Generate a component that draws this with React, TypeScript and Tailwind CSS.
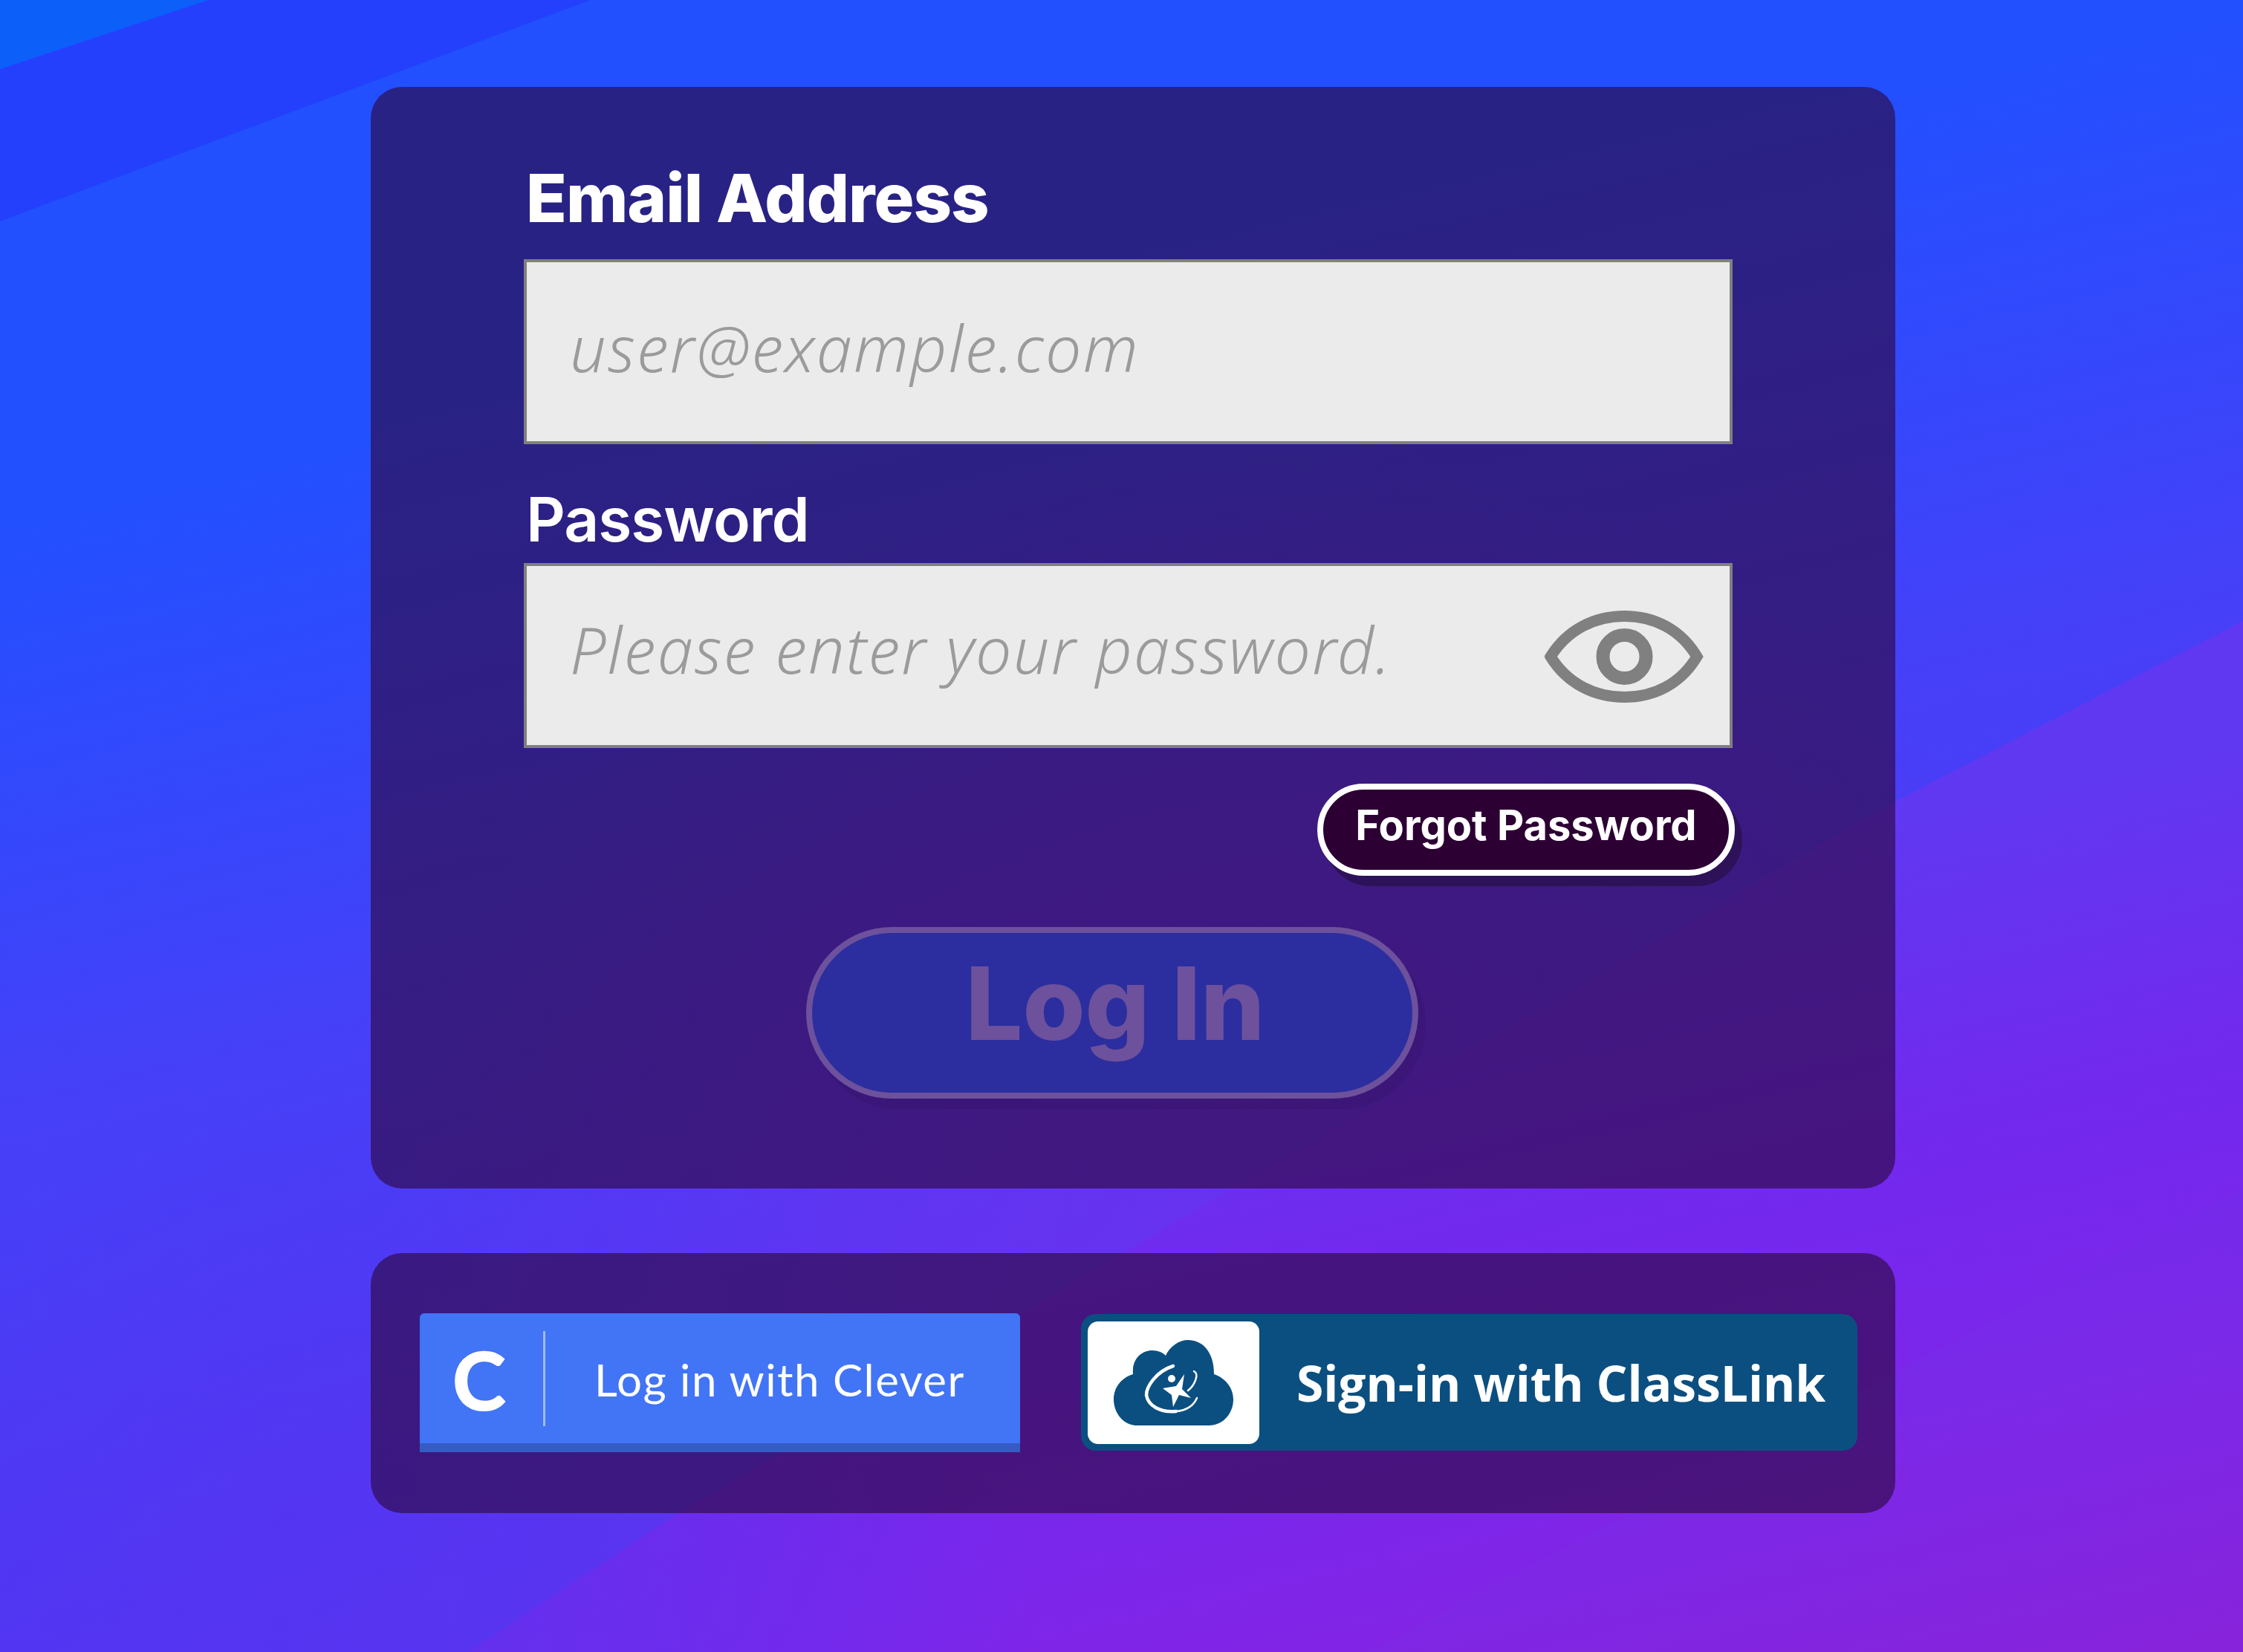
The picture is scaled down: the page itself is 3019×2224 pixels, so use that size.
const Eye = () => (
  <svg className="mt-[3px]" width="215" height="124" viewBox="0 0 215 124" fill="none" stroke="#808080">
    <path d="M8 62C31 25 68 7.500 107.500 7.500S183 25 205 62C183 99 147 116.500 107.500 116.500S31 99 8 62Z" strokeWidth="15" strokeLinejoin="miter" strokeMiterlimit="3" />
    <circle cx="107.500" cy="62" r="29" strokeWidth="18" />
  </svg>
)

const Background = () => (
  <svg className="absolute inset-0" width="3019" height="2224" viewBox="0 0 3019 2224">
    <defs>
      <linearGradient id="pageTop" gradientUnits="userSpaceOnUse" x1="0" y1="0" x2="633" y2="2754">
        <stop offset="0" stopColor="#2250ff" />
        <stop offset="0.24" stopColor="#2250ff" />
        <stop offset="0.52" stopColor="#4640f8" />
        <stop offset="0.77" stopColor="#5036f3" />
        <stop offset="1" stopColor="#5e33ef" />
      </linearGradient>
      <linearGradient id="pageLow" gradientUnits="userSpaceOnUse" x1="0" y1="0" x2="633" y2="2754">
        <stop offset="0.58" stopColor="#6038f2" />
        <stop offset="0.73" stopColor="#7229ee" />
        <stop offset="0.86" stopColor="#7d26ea" />
        <stop offset="1" stopColor="#8a20dc" />
      </linearGradient>
      <radialGradient id="pageGlow" gradientUnits="userSpaceOnUse" cx="1700" cy="1800" r="1200">
        <stop offset="0" stopColor="#7030ee" stopOpacity="0.85" />
        <stop offset="0.5" stopColor="#7030ee" stopOpacity="0.5" />
        <stop offset="1" stopColor="#7030ee" stopOpacity="0" />
      </radialGradient>
      <radialGradient id="pageCorner" gradientUnits="userSpaceOnUse" cx="600" cy="2224" r="800">
        <stop offset="0" stopColor="#5a34f0" stopOpacity="0.7" />
        <stop offset="1" stopColor="#5a34f0" stopOpacity="0" />
      </radialGradient>
    </defs>
    <rect width="3019" height="2224" fill="url(#pageTop)" />
    <rect width="3019" height="2224" fill="url(#pageGlow)" />
    <path d="M631 2224L909 2040L2551 1079L3019 836V2224Z" fill="url(#pageLow)" />
    <path d="M3019 1600L1840 2224H3019Z" fill="#6a50d8" fillOpacity="0.08" />
    <rect y="1400" width="1400" height="824" fill="url(#pageCorner)" />
    <path d="M0 0H795L0 298Z" fill="#2440fc" />
    <path d="M0 0H281L0 93Z" fill="#0d5ffa" />
  </svg>
)

const ClassLinkLogo = () => (
  <svg width="161" height="115" viewBox="0 0 161 115">
    <path d="M28 115C10 112 0 96 0 80C0 64 10 51 26 46C24 25 38 14 52 14C60 14 66 17 70 21C76 8 88 0 100 0C118 0 135 14 135 46C150 51 161 64 161 80C161 98 148 115 128 115Z" fill="#0b4f80" />
    <path d="M80 35C58 42 44 62 44 74C46 88 62 98 84 96" fill="none" stroke="#fff" strokeWidth="4.500" strokeLinecap="round" />
    <path d="M84 96C98 95 108 88 112 78M108 42C116 46 108 62 100 68" fill="none" stroke="#fff" strokeWidth="2.500" strokeLinecap="round" />
    <circle cx="78" cy="52" r="5" fill="#fff" />
    <path d="M66 65L84 62L95 46L92 66L104 78L88 74L80 90L78 74Z" fill="#fff" />
  </svg>
)

export default function App() {
  return (
    <div className="relative h-[2224px] w-[3019px] overflow-hidden font-['Inter',sans-serif]">
      <Background />

      <div className="relative flex flex-col gap-[87px] pt-[117px] pl-[499px]">
        <div className="h-[1483px] w-[2052px] rounded-[42px] bg-[#2e0943]/65 pt-[104px] pl-[206px]">
          <div className="ml-[3px] text-[90px] leading-[92px] font-extrabold tracking-[-1px] text-white">Email Address</div>
          <div className="mt-[36px] flex h-[249px] w-[1627px] items-center border-4 border-[#808080] bg-[#ebebeb] pb-[12px] pl-[58px] font-['Noto_Sans',sans-serif] text-[86px] font-light tracking-[2.2px] text-[#9b9b9b] italic">
            user@example.com
          </div>

          <div className="mt-[58px] ml-[3px] text-[82px] leading-[88px] font-semibold tracking-[-1px] text-white">Password</div>
          <div className="mt-[14px] flex h-[249px] w-[1627px] items-center justify-between border-4 border-[#808080] bg-[#ebebeb] pr-[34px] pl-[58px] font-['Noto_Sans',sans-serif] text-[86px] font-light tracking-[2.2px] text-[#9b9b9b] italic">
            <span className="pb-[18px]">Please enter your password.</span>
            <Eye />
          </div>

          <div className="mt-[48px] flex w-[1630px] justify-end">
            <button className="h-[124px] w-[562px] rounded-full border-[8px] border-white bg-[#2c0033] pb-[12px] text-[56px] font-bold text-white shadow-[10px_14px_0_#2d1259]">
              Forgot Password
            </button>
          </div>

          <button className="mt-[69px] ml-[380px] block h-[231px] w-[824px] rounded-full border-[8px] border-[#6d519c] bg-[#2c2e9f] pb-[26px] pl-[8px] text-[136px] leading-none font-extrabold text-[#6d519c] shadow-[10px_14px_0_rgba(45,15,90,0.2)]">
            Log In
          </button>
        </div>

        <div className="flex h-[350px] w-[2052px] items-start rounded-[42px] bg-[#2e0943]/65 pt-[81px] pl-[66px]">
          <div className="flex h-[187px] w-[808px] items-center rounded-t-[6px] border-b-[12px] border-[#355cc4] bg-[#4274f6] font-['Lato',sans-serif] text-white">
            <span className="ml-[44px] w-[122px] text-[108px] leading-none font-bold [-webkit-text-stroke:2px_white]">C</span>
            <span className="h-[128px] w-[3px] bg-white/50" />
            <span className="mt-[2px] ml-[66px] text-[60px] font-normal tracking-[1.5px]">Log in with Clever</span>
          </div>
          <div className="mt-[1px] ml-[82px] flex h-[184px] w-[1045px] items-center rounded-[20px] bg-[#0b4f80] pl-[9px]">
            <div className="flex h-[165px] w-[231px] items-center justify-center rounded-[14px] bg-white">
              <ClassLinkLogo />
            </div>
            <span className="ml-[50px] font-['Open_Sans',sans-serif] text-[66px] font-bold tracking-[-0.1px] text-white">Sign-in with ClassLink</span>
          </div>
        </div>
      </div>
    </div>
  )
}
